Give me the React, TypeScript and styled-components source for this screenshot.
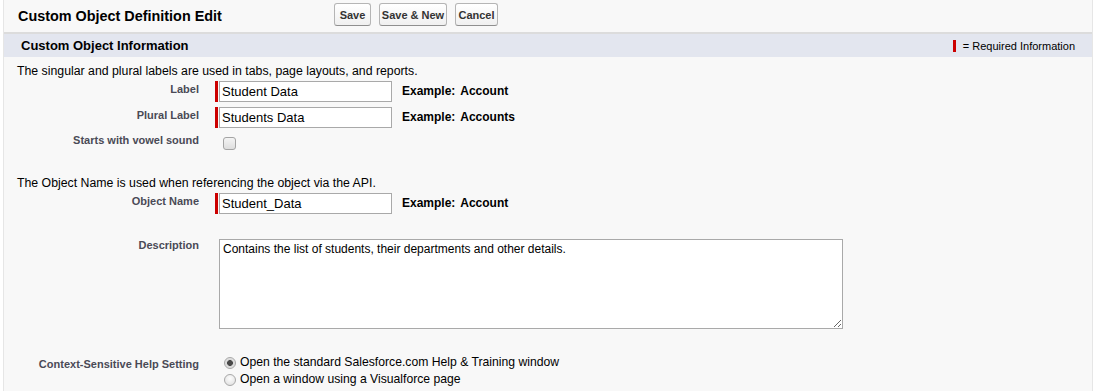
import React from "react";
import styled, { createGlobalStyle } from "styled-components";

const Global = createGlobalStyle`
  html, body { margin: 0; padding: 0; background: #ffffff; }
  body { font-family: "Liberation Sans", Arial, sans-serif; color: #000; }
`;

const Page = styled.div`
  width: 1088px;
  height: 391px;
  margin-left: 3px;
  background: #f8f8f8;
  border-left: 1px solid #e6e6e6;
  border-right: 1px solid #e6e6e6;
  overflow: hidden;
`;

const Header = styled.div`
  display: flex;
  align-items: center;
  height: 32px;
  border-bottom: 2px solid #dcdcdc;
  padding-left: 14px;
`;

const Title = styled.h2`
  margin: 0;
  width: 316px;
  font-size: 14.4px;
  font-weight: bold;
  color: #000;
`;

const ButtonGroup = styled.div`
  display: flex;
  gap: 8px;
  margin-top: -3px;
`;

const Button = styled.button<{ $width: number }>`
  width: ${(p) => p.$width}px;
  height: 23px;
  padding: 0;
  font-family: "Liberation Sans", Arial, sans-serif;
  font-size: 11px;
  font-weight: bold;
  color: #333;
  background: linear-gradient(#ffffff, #f0f0f0);
  border: 1px solid #b5b5b5;
  border-bottom-color: #8f8f8f;
  border-radius: 3px;
  white-space: nowrap;
`;

const SectionBand = styled.div`
  display: flex;
  align-items: center;
  justify-content: space-between;
  height: 23px;
  background: #e3e6ef;
  padding: 0 17px 0 17px;
`;

const SectionTitle = styled.h3`
  margin: 0;
  font-size: 13px;
  font-weight: bold;
  color: #000;
`;

const Legend = styled.div`
  display: flex;
  align-items: center;
  font-size: 11px;
  color: #000;
`;

const RedMark = styled.span`
  display: inline-block;
  width: 3px;
  height: 12px;
  background: #c00;
  margin-right: 7px;
`;

const Body = styled.div`
  padding-top: 7px;
`;

const Intro = styled.p<{ $top?: number }>`
  margin: ${(p) => p.$top ?? 0}px 0 3px 13px;
  font-size: 12.3px;
  line-height: 14px;
  color: #000;
`;

const Row = styled.div<{ $gap?: number; $height?: number }>`
  display: grid;
  grid-template-columns: 195px 1fr;
  column-gap: 16px;
  margin-top: ${(p) => p.$gap ?? 0}px;
  min-height: ${(p) => p.$height ?? 21}px;
`;

const Label = styled.label<{ $pt?: number }>`
  text-align: right;
  font-size: 11px;
  font-weight: bold;
  color: #4a4a56;
  padding-top: ${(p) => p.$pt ?? 2}px;
`;

const Data = styled.div`
  display: flex;
  align-items: flex-start;
`;

const Required = styled.div`
  display: flex;
  border-left: 3px solid #c00;
  padding-left: 1px;
`;

const TextInput = styled.input`
  box-sizing: border-box;
  width: 173px;
  height: 21px;
  border: 1px solid #a9a9a9;
  background: #fff;
  padding: 0 2px;
  font-family: "Liberation Sans", Arial, sans-serif;
  font-size: 13px;
  color: #000;
  outline: none;
`;

const Example = styled.span`
  margin-left: 10px;
  padding-top: 3px;
  font-size: 12px;
  font-weight: bold;
  color: #000;
  word-spacing: 2px;
`;

const Checkbox = styled.input`
  appearance: none;
  margin: 4px 0 0 8px;
  width: 13px;
  height: 13px;
  border: 1px solid #a4a4a4;
  border-radius: 3px;
  background: linear-gradient(#f4f4f4, #dedede);
`;

const TextArea = styled.textarea`
  box-sizing: border-box;
  width: 624px;
  height: 90px;
  margin-left: 4px;
  border: 1px solid #a9a9a9;
  background: #fff;
  padding: 2px 3px;
  font-family: "Liberation Sans", Arial, sans-serif;
  font-size: 12px;
  line-height: 15px;
  color: #000;
  outline: none;
  resize: both;
`;

const RadioList = styled.div`
  display: flex;
  flex-direction: column;
  gap: 2px;
  padding-left: 9px;
  padding-top: 2px;
`;

const RadioOption = styled.label`
  display: flex;
  align-items: center;
  gap: 4px;
  font-size: 12.2px;
  line-height: 15px;
  color: #000;
`;

const Radio = styled.input`
  appearance: none;
  margin: 0;
  width: 12px;
  height: 12px;
  border: 1px solid #a8a8a8;
  border-radius: 50%;
  background: radial-gradient(circle at 50% 35%, #fdfdfd, #dcdcdc);
  &:checked {
    background: radial-gradient(circle, #4a4a4a 0 2.6px, #d8d8d8 3.2px, #f0f0f0 100%);
  }
`;

export default function App() {
  return (
    <>
      <Global />
      <Page>
        <Header>
          <Title>Custom Object Definition Edit</Title>
          <ButtonGroup>
            <Button $width={37}>Save</Button>
            <Button $width={68}>Save &amp; New</Button>
            <Button $width={43}>Cancel</Button>
          </ButtonGroup>
        </Header>
        <SectionBand>
          <SectionTitle>Custom Object Information</SectionTitle>
          <Legend>
            <RedMark />= Required Information
          </Legend>
        </SectionBand>
        <Body>
          <Intro>The singular and plural labels are used in tabs, page layouts, and reports.</Intro>
          <Row>
            <Label>Label</Label>
            <Data>
              <Required>
                <TextInput defaultValue="Student Data" />
              </Required>
              <Example>Example: Account</Example>
            </Data>
          </Row>
          <Row $gap={5}>
            <Label>Plural Label</Label>
            <Data>
              <Required>
                <TextInput defaultValue="Students Data" />
              </Required>
              <Example>Example: Accounts</Example>
            </Data>
          </Row>
          <Row $gap={5}>
            <Label $pt={1}>Starts with vowel sound</Label>
            <Data>
              <Checkbox type="checkbox" />
            </Data>
          </Row>
          <Intro $top={22}>The Object Name is used when referencing the object via the API.</Intro>
          <Row>
            <Label>Object Name</Label>
            <Data>
              <Required>
                <TextInput defaultValue="Student_Data" />
              </Required>
              <Example>Example: Account</Example>
            </Data>
          </Row>
          <Row $gap={25}>
            <Label $pt={0}>Description</Label>
            <Data>
              <TextArea defaultValue="Contains the list of students, their departments and other details." />
            </Data>
          </Row>
          <Row $gap={24}>
            <Label $pt={5}>Context-Sensitive Help Setting</Label>
            <RadioList>
              <RadioOption>
                <Radio type="radio" name="help" defaultChecked />
                Open the standard Salesforce.com Help &amp; Training window
              </RadioOption>
              <RadioOption>
                <Radio type="radio" name="help" />
                Open a window using a Visualforce page
              </RadioOption>
            </RadioList>
          </Row>
        </Body>
      </Page>
    </>
  );
}
